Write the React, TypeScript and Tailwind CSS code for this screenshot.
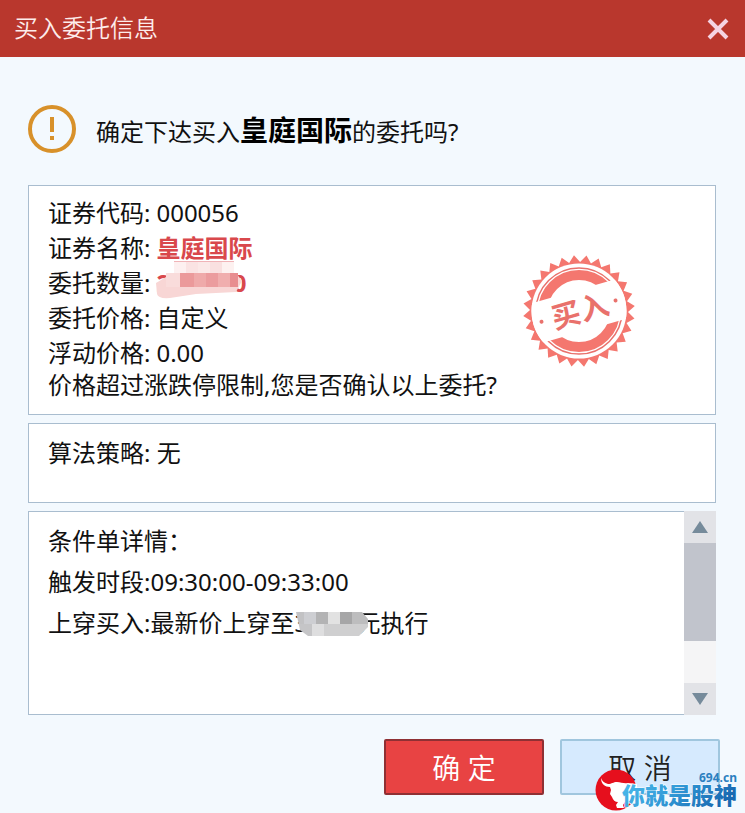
import type { ReactNode } from "react";

type OrderField = {
  label: string;
  value: ReactNode;
};

type MosaicCell = {
  x: number;
  y: number;
  w: number;
  h: number;
  fill: string;
};

const quantityMosaic: MosaicCell[] = [
  { x: 18, y: 0, w: 60, h: 1, fill: "#f0b4b8" },
  { x: 18, y: 1, w: 12, h: 11, fill: "#fdf0f0" },
  { x: 30, y: 1, w: 12, h: 11, fill: "#fae3e3" },
  { x: 42, y: 1, w: 12, h: 11, fill: "#fbe9e8" },
  { x: 54, y: 1, w: 12, h: 11, fill: "#f9e0e0" },
  { x: 66, y: 1, w: 12, h: 11, fill: "#fdf1f0" },
  { x: 10, y: 12, w: 15, h: 14, fill: "#f9dcdb" },
  { x: 24, y: 12, w: 14, h: 14, fill: "#eb9a9b" },
  { x: 38, y: 12, w: 12, h: 14, fill: "#efaaaa" },
  { x: 50, y: 12, w: 12, h: 14, fill: "#eb9c9e" },
  { x: 62, y: 12, w: 12, h: 14, fill: "#f0aeae" },
  { x: 74, y: 12, w: 8, h: 14, fill: "#e88d90" },
];

const priceMosaic: MosaicCell[] = [
  { x: 0, y: 0, w: 8, h: 12, fill: "#c2c2c4" },
  { x: 8, y: 0, w: 12, h: 12, fill: "#cdced2" },
  { x: 20, y: 0, w: 12, h: 12, fill: "#b3b3b4" },
  { x: 32, y: 0, w: 12, h: 12, fill: "#e2e2e2" },
  { x: 44, y: 0, w: 12, h: 12, fill: "#a6a6a7" },
  { x: 56, y: 0, w: 16, h: 12, fill: "#bdbdbe" },
  { x: 0, y: 12, w: 16, h: 12, fill: "#c5c5c7" },
  { x: 16, y: 12, w: 12, h: 12, fill: "#dededf" },
  { x: 28, y: 12, w: 44, h: 12, fill: "#cfcfd0" },
];

// Stamp edge: 28 teeth between the two radii.
const stampTeeth = Array.from({ length: 56 }, (_, index) => {
  const radius = index % 2 === 0 ? 56 : 49;
  const angle = (index * Math.PI) / 28 - Math.PI / 2 - 0.09;

  return `${(56 + radius * Math.cos(angle)).toFixed(2)},${(
    56 +
    radius * Math.sin(angle)
  ).toFixed(2)}`;
}).join(" ");

function renderCells(cells: MosaicCell[]) {
  return cells.map((cell) => (
    <rect
      key={`${cell.x}-${cell.y}`}
      x={cell.x}
      y={cell.y}
      width={cell.w}
      height={cell.h}
      fill={cell.fill}
    />
  ));
}

function HiddenQuantity() {
  return (
    <span className="relative inline-flex w-[90px] justify-between font-bold text-[#d9484c]">
      <span>2</span>
      <span>0</span>
      <svg
        aria-hidden="true"
        viewBox="0 0 88 38"
        className="absolute left-0 -top-1 h-[38px] w-[88px]"
      >
        <path
          d="M0 22 L10 16 L24 12 H80 L86 20 L80 31 L40 33 L14 37 Q2 38 1 33 Z"
          fill="#f8d6d5"
        />
        {renderCells(quantityMosaic)}
      </svg>
    </span>
  );
}

function HiddenPrice() {
  return (
    <span className="relative inline-block w-[62px]">
      3
      <svg
        aria-hidden="true"
        viewBox="0 0 72 24"
        className="absolute left-0.5 top-2.5 h-6 w-[72px]"
      >
        <clipPath id="price-mask">
          <path d="M0 0 H66 L72 7 V15 L63 24 H12 L4 18 Z" />
        </clipPath>
        <g clipPath="url(#price-mask)">{renderCells(priceMosaic)}</g>
      </svg>
    </span>
  );
}

const orderFields: OrderField[] = [
  { label: "证券代码:", value: "000056" },
  {
    label: "证券名称:",
    value: <strong className="font-bold text-[#d9484c]">皇庭国际</strong>,
  },
  { label: "委托数量:", value: <HiddenQuantity /> },
  { label: "委托价格:", value: "自定义" },
  { label: "浮动价格:", value: "0.00" },
];

function WarningIcon() {
  return (
    <svg aria-hidden="true" viewBox="0 0 48 48" className="size-12 shrink-0">
      <circle cx="24" cy="24" r="22" fill="none" stroke="#d8912a" strokeWidth="4" />
      <path d="M22 12 H26 V27 H22 Z M22 31 H26 V35 H22 Z" fill="#d8912a" />
    </svg>
  );
}

function BuyStamp() {
  return (
    <svg
      role="img"
      aria-label="买入"
      viewBox="0 0 112 112"
      className="mb-[33px] size-28 shrink-0"
    >
      <clipPath id="stamp-face">
        <circle cx="56" cy="56" r="47.5" />
      </clipPath>
      <polygon points={stampTeeth} fill="#f4776f" />
      <circle cx="56" cy="56" r="47.5" fill="#fff" />
      <circle cx="56" cy="56" r="43" fill="none" stroke="#e9716c" strokeWidth="1.5" />
      <circle cx="56" cy="56" r="36" fill="none" stroke="#f4776f" strokeWidth="10" />
      <g transform="rotate(-16 56 56)">
        <rect
          x="6"
          y="35.5"
          width="100"
          height="41"
          fill="#fff"
          clipPath="url(#stamp-face)"
        />
        <circle cx="17" cy="56" r="2" fill="#e9716c" />
        <circle cx="94" cy="56" r="2" fill="#e9716c" />
        <text
          x="57"
          y="67"
          textAnchor="middle"
          fontSize="29"
          fontWeight="700"
          fill="#e9716c"
        >
          买入
        </text>
      </g>
    </svg>
  );
}

function SiteMark() {
  return (
    <svg
      role="img"
      aria-label="你就是股神 694.cn"
      viewBox="0 0 146 42"
      className="pointer-events-none absolute bottom-0.5 right-1 h-[42px] w-[146px]"
    >
      <defs>
        <linearGradient id="mark-blue" x1="0" x2="1" y1="0" y2="0.3">
          <stop offset="0" stopColor="#4fbdec" />
          <stop offset="0.5" stopColor="#339bd8" />
          <stop offset="1" stopColor="#1a6ab2" />
        </linearGradient>
      </defs>
      <circle cx="21" cy="21" r="20.5" fill="#e60f1d" />
      <path
        d="M6 9 C7 12 9 14 13 15 C17 15 18 13 22 13 C26 13 29 15 33 14 L42 15 V29 L36 32 L34 35 L30 33 L28 36 L29 39 H22 L21 36 L23 33 C20 33 18 31 17 28 L15 25 L16 21 L15 18 C10 18 6 15 6 9 Z"
        fill="#fff"
      />
      <text
        x="27"
        y="35"
        fontSize="23"
        fontWeight="900"
        fill="url(#mark-blue)"
        stroke="#fff"
        strokeWidth="1"
        paintOrder="stroke"
      >
        你就是股神
      </text>
      <text x="104" y="13" fontSize="12" fontWeight="700" fill="#2b7fc0">
        694.cn
      </text>
    </svg>
  );
}

function DetailScrollbar() {
  return (
    <div className="flex w-8 shrink-0 flex-col bg-[#f5f5f6]">
      <button
        type="button"
        aria-label="向上滚动"
        className="flex h-8 items-center justify-center bg-[#e2e3e7]"
      >
        <svg aria-hidden="true" viewBox="0 0 16 12" className="h-3 w-4">
          <path d="M8 0 L16 12 H0 Z" fill="#768b9b" />
        </svg>
      </button>
      <div className="h-[98px] bg-[#c1c4cc]" />
      <button
        type="button"
        aria-label="向下滚动"
        className="mt-auto flex h-8 items-center justify-center bg-[#e2e3e7]"
      >
        <svg aria-hidden="true" viewBox="0 0 16 12" className="h-3 w-4">
          <path d="M0 0 H16 L8 12 Z" fill="#768b9b" />
        </svg>
      </button>
    </div>
  );
}

export default function App() {
  return (
    <main className="relative min-h-screen bg-[#f3f9fe] pb-4 font-['Noto_Sans','Noto_Sans_CJK_SC',sans-serif] text-2xl text-[#111]">
      <header className="flex h-[57px] items-center justify-between bg-[#b9372d] pl-3.5 pr-4 text-[#fdeceb]">
        <h1 className="pb-0.5 font-[350]">买入委托信息</h1>
        <button type="button" aria-label="关闭">
          <svg aria-hidden="true" viewBox="0 0 22 22" className="size-[22px]">
            <path d="M2 2 L20 20 M20 2 L2 20" stroke="#f5d3e2" strokeWidth="4" />
          </svg>
        </button>
      </header>

      <section className="flex items-center gap-5 px-7 pb-8 pt-12">
        <WarningIcon />
        <p className="pt-1 leading-8">
          确定下达买入
          <strong className="text-[28px] font-bold text-black">皇庭国际</strong>
          的委托吗?
        </p>
      </section>

      <div className="flex flex-col gap-2 pl-7 pr-[29px]">
        <section className="flex items-end justify-between border border-[#a9bdcf] bg-white pb-3.5 pl-[19px] pr-20 pt-[9px]">
          <div>
            <dl>
              {orderFields.map((field) => (
                <div key={field.label} className="flex gap-1.5 leading-[35px]">
                  <dt>{field.label}</dt>
                  <dd>{field.value}</dd>
                </div>
              ))}
            </dl>
            <p className="leading-[30px]">价格超过涨跌停限制,您是否确认以上委托?</p>
          </div>
          <BuyStamp />
        </section>

        <section className="min-h-20 border border-[#a9bdcf] bg-white px-[19px] py-[11px] leading-[35px]">
          算法策略: 无
        </section>

        <section className="flex min-h-[204px]">
          <div className="grow border border-r-0 border-[#a9bdcf] bg-white px-[19px] py-2 leading-[41px]">
            <h2>条件单详情：</h2>
            <p>触发时段:09:30:00-09:33:00</p>
            <p>
              上穿买入:最新价上穿至
              <HiddenPrice />
              元执行
            </p>
          </div>
          <DetailScrollbar />
        </section>
      </div>

      <footer className="flex justify-end gap-4 pr-[25px] pt-6 text-[28px]">
        <button
          type="button"
          className="h-14 w-40 rounded-xs border-2 border-[#8f3034] bg-[#e84343] pt-1 font-[350] text-white"
        >
          确 定
        </button>
        <button
          type="button"
          className="h-14 w-40 rounded-xs border-2 border-[#a0c6de] bg-[#d6eafe] pt-1 font-[350] text-[#222]"
        >
          取 消
        </button>
      </footer>

      <SiteMark />
    </main>
  );
}
